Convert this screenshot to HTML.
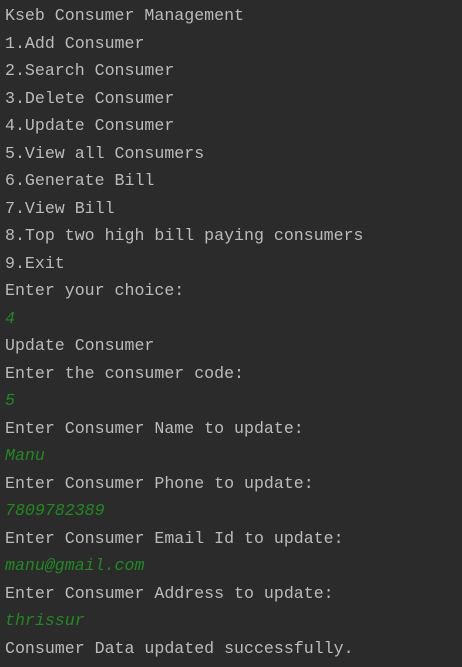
<!DOCTYPE html>
<html><head><meta charset="utf-8"><style>
html,body{margin:0;padding:0;background:#2b2b2b;width:462px;height:667px;overflow:hidden}
.c{position:absolute;left:5px;top:2px;font-family:"Liberation Mono",monospace;font-size:16.6px;line-height:27.5px;color:#bbbbbb;white-space:pre}
.g{color:#1f8a1f;font-style:italic}
</style></head><body><div class="c">Kseb Consumer Management
1.Add Consumer
2.Search Consumer
3.Delete Consumer
4.Update Consumer
5.View all Consumers
6.Generate Bill
7.View Bill
8.Top two high bill paying consumers
9.Exit
Enter your choice:
<span class="g">4</span>
Update Consumer
Enter the consumer code:
<span class="g">5</span>
Enter Consumer Name to update:
<span class="g">Manu</span>
Enter Consumer Phone to update:
<span class="g">7809782389</span>
Enter Consumer Email Id to update:
<span class="g">manu@gmail.com</span>
Enter Consumer Address to update:
<span class="g">thrissur</span>
Consumer Data updated successfully.</div></body></html>
